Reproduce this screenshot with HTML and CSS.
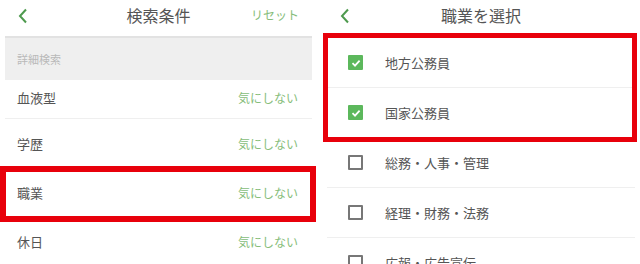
FILE: index.html
```html
<!DOCTYPE html>
<html lang="ja">
<head>
<meta charset="utf-8">
<link rel="stylesheet" href="styles.css">
</head>
<body>
<div class="page">
  <section class="panel left">
    <header class="bar">
      <span class="back"><svg width="10" height="16" viewBox="0 0 10 16"><path d="M8 1.5 L2 8 L8 14.5" fill="none" stroke="#4e9a4e" stroke-width="2"/></svg></span>
      <h1 class="title">検索条件</h1>
      <span class="reset">リセット</span>
    </header>
    <div class="section">詳細検索</div>
    <ul class="list">
      <li class="row first"><span class="label">血液型</span><span class="value">気にしない</span></li>
      <li class="row"><span class="label">学歴</span><span class="value">気にしない</span></li>
      <li class="row"><span class="label">職業</span><span class="value">気にしない</span></li>
      <li class="row"><span class="label">休日</span><span class="value">気にしない</span></li>
    </ul>
    <div class="highlight hl-left"></div>
  </section>
  <section class="panel right">
    <header class="bar">
      <span class="back"><svg width="10" height="16" viewBox="0 0 10 16"><path d="M8 1.5 L2 8 L8 14.5" fill="none" stroke="#4e9a4e" stroke-width="2"/></svg></span>
      <h1 class="title">職業を選択</h1>
      <span class="reset"></span>
    </header>
    <ul class="list checks">
      <li class="crow"><span class="box on"><svg width="14" height="14" viewBox="0 0 14 14"><path d="M3.5 7.2 L6 9.6 L10.6 4.6" fill="none" stroke="#fff" stroke-width="1.8"/></svg></span><span class="label">地方公務員</span></li>
      <li class="crow"><span class="box on"><svg width="14" height="14" viewBox="0 0 14 14"><path d="M3.5 7.2 L6 9.6 L10.6 4.6" fill="none" stroke="#fff" stroke-width="1.8"/></svg></span><span class="label">国家公務員</span></li>
      <li class="crow"><span class="box"></span><span class="label">総務・人事・管理</span></li>
      <li class="crow"><span class="box"></span><span class="label">経理・財務・法務</span></li>
      <li class="crow"><span class="box"></span><span class="label">広報・広告宣伝</span></li>
    </ul>
    <div class="highlight hl-right"></div>
  </section>
</div>
</body>
</html>
```
FILE: styles.css
```css
* { box-sizing: border-box; }
html, body { margin: 0; padding: 0; background: #fff; }
body {
  font-family: "Noto Sans CJK JP", "Noto Sans", sans-serif;
  color: #555;
  overflow: hidden;
  width: 640px;
  height: 264px;
}
.page {
  display: flex;
  gap: 3px;
  width: 640px;
  height: 264px;
}
.panel {
  position: relative;
  flex: 0 0 auto;
  height: 264px;
  overflow: hidden;
  background: #fff;
}
.left { width: 317px; }
.right { width: 320px; }
.bar {
  height: 32px;
  display: flex;
  align-items: center;
  justify-content: space-between;
  padding: 0 18px;
}
.right .bar { padding-left: 20px; }
.back { display: flex; align-items: center; flex: 0 0 48px; width: 48px; }
.back svg { display: block; }
.title {
  margin: 0;
  font-size: 16px;
  font-weight: normal;
  color: #555;
  line-height: 1;
  position: relative;
  top: -1px;
}
.reset {
  flex: 0 0 48px;
  font-size: 12px;
  color: #86bd7a;
  text-align: right;
  line-height: 1;
  position: relative;
  top: -1px;
}
.section {
  margin: 4px 5px 0 5px;
  height: 44px;
  background: #efefef;
  border-top: 2px solid #e2e2e2;
  display: flex;
  align-items: center;
  padding-left: 12px;
  font-size: 11px;
  color: #b9b9b9;
}
.list { list-style: none; margin: 0; padding: 0; }
.row {
  margin: 0 5px;
  height: 49px;
  border-bottom: 1px solid #efefef;
  display: flex;
  align-items: center;
  justify-content: space-between;
  padding: 0 14px 0 12px;
}
.row.first { height: 39px; padding-bottom: 4px; }
.row .label { font-size: 13px; color: #555; }
.row .value { font-size: 12px; color: #86bd7a; }
.checks { margin-top: 6px; }
.crow {
  margin: 0 5px 0 7px;
  height: 50px;
  border-bottom: 1px solid #efefef;
  display: flex;
  align-items: center;
  padding-left: 21px;
}
.box {
  width: 15px;
  height: 15px;
  border: 2px solid #777;
  border-radius: 1px;
  margin-right: 22px;
  display: flex;
  align-items: center;
  justify-content: center;
  flex: 0 0 auto;
}
.box.on {
  background: #5cb85c;
  border-color: #5cb85c;
}
.box.on svg { display: block; flex: 0 0 auto; }
.crow .label { font-size: 13px; color: #555; }
.highlight {
  position: absolute;
  border: 6px solid #e8000b;
  pointer-events: none;
}
.hl-left { left: 0; top: 166px; width: 316px; height: 56px; }
.hl-right { left: 3px; top: 33px; width: 314px; height: 109px; border-width: 5px; }
```
